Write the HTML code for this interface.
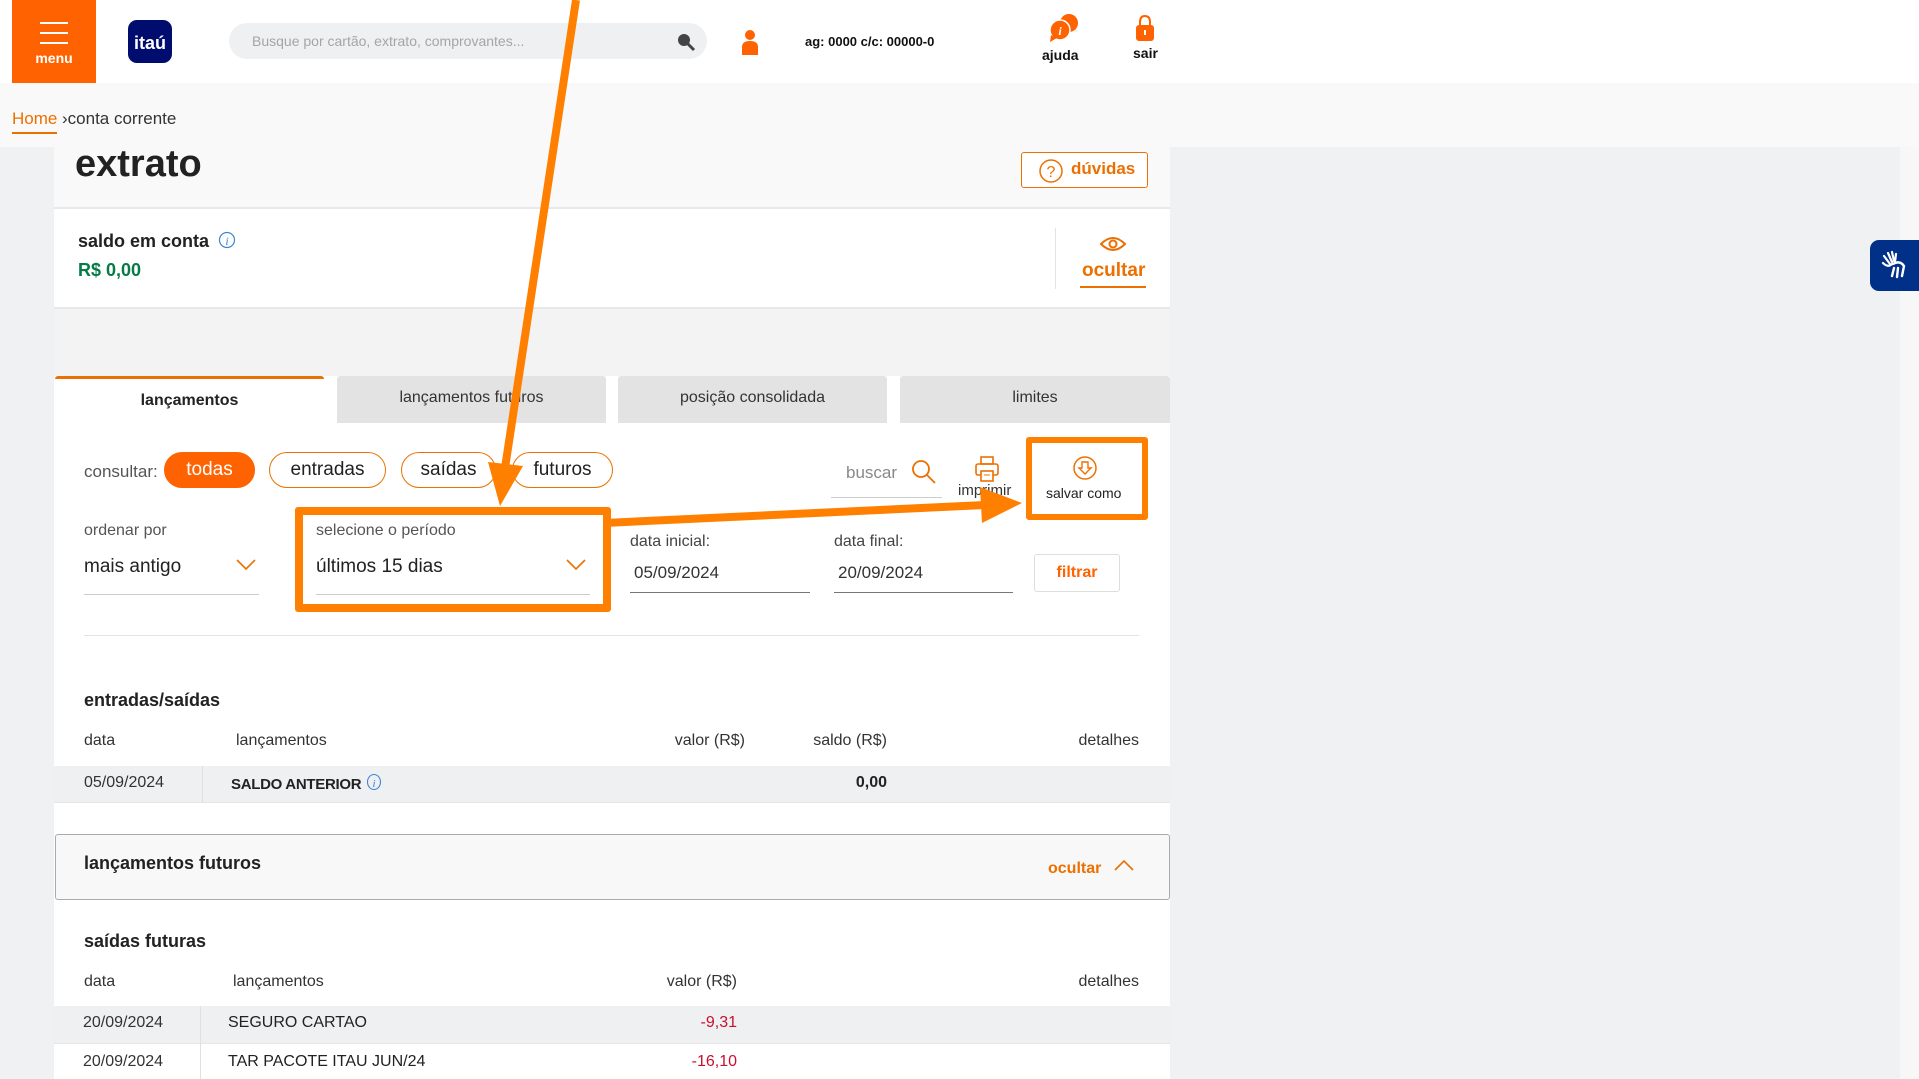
<!DOCTYPE html>
<html><head><meta charset="utf-8"><style>
*{margin:0;padding:0;box-sizing:border-box}
body{width:1919px;height:1079px;overflow:hidden;background:#f0f1f3;font-family:"Liberation Sans",sans-serif;color:#222;position:relative}
.a{position:absolute;white-space:nowrap}
.o{color:#ec7000}
.chip{position:absolute;height:36px;border:1px solid #ec7000;border-radius:18px;font-size:19px;line-height:34px;text-align:center;color:#222;background:#fff}
.tab{position:absolute;top:376px;height:47px;background:#e3e3e3;font-size:16px;line-height:44px;text-align:center;color:#333;border-radius:3px 3px 0 0}
.lbl{font-size:16px;color:#555}
.ul{position:absolute;height:1px;background:#999}
</style></head><body>
<div class="a" style="left:0;top:0;width:1919px;height:83px;background:#fff"></div>
<div class="a" style="left:12px;top:0;width:84px;height:83px;background:#ff6200"></div>
<div class="a" style="left:40px;top:22px;width:28px;height:2px;background:#fff"></div>
<div class="a" style="left:40px;top:32px;width:28px;height:2px;background:#fff"></div>
<div class="a" style="left:40px;top:42px;width:28px;height:2px;background:#fff"></div>
<div class="a" style="left:12px;top:50px;width:84px;text-align:center;color:#fff;font-weight:bold;font-size:14px">menu</div>
<div class="a" style="left:128px;top:20px;width:44px;height:43px;background:#000c6e;border-radius:9px;color:#fff;font-weight:bold;font-size:18px;text-align:center;line-height:46px">itaú</div>
<div class="a" style="left:229px;top:23px;width:478px;height:36px;background:#eff0f2;border-radius:18px"></div>
<div class="a" style="left:252px;top:33px;font-size:14px;color:#a5a5a5">Busque por cartão, extrato, comprovantes...</div>
<svg class="a" style="left:676px;top:32px" width="20" height="20"><circle cx="8" cy="8" r="6" fill="#444"/><line x1="12" y1="12" x2="18" y2="18" stroke="#444" stroke-width="3"/></svg>
<svg class="a" style="left:741px;top:29px" width="18" height="26"><circle cx="9" cy="6" r="5" fill="#ff6200"/><path d="M1 26 V18 Q1 12 9 12 Q17 12 17 18 V26Z" fill="#ff6200"/></svg>
<div class="a" style="left:805px;top:34px;font-size:13px;font-weight:bold;color:#111">ag: 0000 c/c: 00000-0</div>
<svg class="a" style="left:1046px;top:13px" width="34" height="30"><circle cx="23" cy="10" r="9" fill="#ff6200"/><path d="M26 12 L32 20 L28 14Z" fill="#ff6200"/><circle cx="14" cy="17" r="10" fill="#ff6200" stroke="#fff" stroke-width="1.5"/><path d="M5 22 L4 29 L11 25Z" fill="#ff6200"/><text x="14" y="22" font-size="12" fill="#fff" font-style="italic" font-weight="bold" text-anchor="middle" font-family="Liberation Serif">i</text></svg>
<div class="a" style="left:1042px;top:47px;font-size:14px;font-weight:bold;color:#111">ajuda</div>
<svg class="a" style="left:1134px;top:14px" width="22" height="28"><path d="M6 12 V8 Q6 2 11 2 Q16 2 16 8 V12" fill="none" stroke="#ff6200" stroke-width="2"/><rect x="2" y="11" width="18" height="16" rx="3" fill="#ff6200"/><rect x="10" y="16" width="2" height="5" fill="#fff"/></svg>
<div class="a" style="left:1133px;top:45px;font-size:14px;font-weight:bold;color:#111">sair</div>
<div class="a" style="left:0;top:83px;width:1919px;height:64px;background:#f9f9f9"></div>
<div class="a o" style="left:12px;top:109px;font-size:17px;border-bottom:2px solid #ec7000;padding-bottom:3px;color:#ec7000">Home</div>
<div class="a" style="left:62px;top:109px;font-size:17px;color:#333">›conta corrente</div>
<div class="a" style="left:1900px;top:147px;width:19px;height:932px;background:#f7f7f7"></div>
<div class="a" style="left:54px;top:147px;width:1116px;height:932px;background:#fff"></div>
<div class="a" style="left:54px;top:147px;width:1116px;height:62px;background:#f9f9f9;border-bottom:2px solid #e8e8e8"></div>
<div class="a" style="left:75px;top:143px;font-size:38px;font-weight:bold;color:#222">extrato</div>
<div class="a" style="left:1021px;top:152px;width:127px;height:36px;border:1.5px solid #ec7000;border-radius:3px;background:#fff"></div>
<svg class="a" style="left:1038px;top:158px" width="26" height="26"><circle cx="13" cy="13" r="11" fill="none" stroke="#ec7000" stroke-width="1.5"/><text x="13" y="19" font-size="16" fill="#ec7000" text-anchor="middle">?</text></svg>
<div class="a o" style="left:1071px;top:159px;font-size:17px;font-weight:bold">dúvidas</div>
<div class="a" style="left:78px;top:231px;font-size:18px;font-weight:bold;color:#222">saldo em conta</div>
<svg class="a" style="left:218px;top:231px" width="18" height="18"><circle cx="9" cy="9" r="7.5" fill="none" stroke="#3a87d6" stroke-width="1.2"/><text x="9" y="14" font-size="12" font-style="italic" fill="#3a87d6" text-anchor="middle" font-family="Liberation Serif">i</text></svg>
<div class="a" style="left:78px;top:260px;font-size:18px;font-weight:bold;color:#067a47">R$ 0,00</div>
<div class="a" style="left:1055px;top:228px;width:1px;height:61px;background:#e3e3e3"></div>
<svg class="a" style="left:1100px;top:236px" width="26" height="16"><path d="M1 8 Q13 -4 25 8 Q13 20 1 8Z" fill="none" stroke="#ec7000" stroke-width="2"/><circle cx="13" cy="8" r="3.5" fill="none" stroke="#ec7000" stroke-width="2"/></svg>
<div class="a o" style="left:1082px;top:260px;font-size:19px;font-weight:bold">ocultar</div>
<div class="a" style="left:1080px;top:286px;width:66px;height:2px;background:#ec7000"></div>
<div class="a" style="left:54px;top:307px;width:1116px;height:69px;background:#f3f3f3;border-top:2px solid #e8e8e8"></div>
<div class="tab" style="left:55px;width:269px;background:#fff;border-top:3px solid #ec7000;font-weight:bold;color:#222">lançamentos</div>
<div class="tab" style="left:337px;width:269px">lançamentos futuros</div>
<div class="tab" style="left:618px;width:269px">posição consolidada</div>
<div class="tab" style="left:900px;width:270px">limites</div>
<div class="a lbl" style="left:84px;top:462px;font-size:17px">consultar:</div>
<div class="chip" style="left:164px;top:452px;width:91px;background:#ff6200;color:#fff;border-color:#ff6200">todas</div>
<div class="chip" style="left:269px;top:452px;width:117px">entradas</div>
<div class="chip" style="left:401px;top:452px;width:95px">saídas</div>
<div class="chip" style="left:512px;top:452px;width:101px">futuros</div>
<div class="a lbl" style="left:846px;top:463px;font-size:17px;color:#888">buscar</div>
<div class="ul" style="left:831px;top:497px;width:111px;background:#ccc"></div>
<svg class="a" style="left:910px;top:458px" width="28" height="28"><circle cx="11" cy="11" r="8" fill="none" stroke="#ec7000" stroke-width="1.8"/><line x1="17" y1="17" x2="25" y2="25" stroke="#ec7000" stroke-width="1.8"/></svg>
<svg class="a" style="left:974px;top:455px" width="26" height="28"><rect x="7" y="2" width="12" height="7" fill="none" stroke="#ec7000" stroke-width="1.6"/><rect x="2" y="9" width="22" height="11" rx="2" fill="none" stroke="#ec7000" stroke-width="1.6"/><rect x="7" y="16" width="12" height="10" fill="#fff" stroke="#ec7000" stroke-width="1.6"/><line x1="10" y1="20" x2="16" y2="20" stroke="#ec7000"/></svg>
<div class="a" style="left:958px;top:482px;font-size:15px;color:#333">imprimir</div>
<div class="a" style="left:1026px;top:437px;width:122px;height:83px;border:6px solid #ff8000;border-radius:3px;background:#fff"></div>
<svg class="a" style="left:1072px;top:455px" width="26" height="26"><circle cx="13" cy="13" r="11" fill="none" stroke="#ec7000" stroke-width="1.5"/><path d="M10 7 H16 V13 H19 L13 19 L7 13 H10Z" fill="none" stroke="#ec7000" stroke-width="1.4"/></svg>
<div class="a" style="left:1046px;top:485px;font-size:14px;color:#222">salvar como</div>
<div class="a lbl" style="left:84px;top:522px">ordenar por</div>
<div class="a" style="left:84px;top:556px;font-size:19px;color:#222">mais antigo</div>
<svg class="a" style="left:235px;top:558px" width="22" height="14"><path d="M2 2 L11 11 L20 2" fill="none" stroke="#ec7000" stroke-width="1.6"/></svg>
<div class="ul" style="left:84px;top:594px;width:175px;background:#ccc"></div>
<div class="a" style="left:295px;top:507px;width:316px;height:105px;border:8px solid #ff8000;border-radius:3px;background:#fff"></div>
<div class="a lbl" style="left:316px;top:522px">selecione o período</div>
<div class="a" style="left:316px;top:556px;font-size:19px;color:#222">últimos 15 dias</div>
<svg class="a" style="left:565px;top:558px" width="22" height="14"><path d="M2 2 L11 11 L20 2" fill="none" stroke="#ec7000" stroke-width="1.6"/></svg>
<div class="ul" style="left:316px;top:594px;width:274px;background:#ccc"></div>
<div class="a lbl" style="left:630px;top:533px;color:#444">data inicial:</div>
<div class="a" style="left:634px;top:563px;font-size:17px;color:#333">05/09/2024</div>
<div class="ul" style="left:630px;top:592px;width:180px;background:#777"></div>
<div class="a lbl" style="left:834px;top:533px;color:#444">data final:</div>
<div class="a" style="left:838px;top:563px;font-size:17px;color:#333">20/09/2024</div>
<div class="ul" style="left:834px;top:592px;width:179px;background:#777"></div>
<div class="a" style="left:1034px;top:554px;width:86px;height:38px;border:1px solid #ddd;border-radius:3px;text-align:center;line-height:36px;color:#ff6200;font-weight:bold;font-size:16px">filtrar</div>
<div class="a" style="left:84px;top:635px;width:1055px;height:1px;background:#e3e3e3"></div>
<div class="a" style="left:84px;top:690px;font-size:18px;font-weight:bold;color:#222">entradas/saídas</div>
<div class="a lbl" style="left:84px;top:732px;color:#333">data</div>
<div class="a lbl" style="left:236px;top:732px;color:#333">lançamentos</div>
<div class="a lbl" style="left:645px;top:732px;width:100px;text-align:right;color:#333">valor (R$)</div>
<div class="a lbl" style="left:787px;top:732px;width:100px;text-align:right;color:#333">saldo (R$)</div>
<div class="a lbl" style="left:1039px;top:732px;width:100px;text-align:right;color:#333">detalhes</div>
<div class="a" style="left:54px;top:766px;width:1116px;height:37px;background:#eff0f2;border-bottom:1px solid #e6e6e6"></div>
<div class="a" style="left:202px;top:766px;width:1px;height:37px;background:#e0e0e0"></div>
<div class="a" style="left:84px;top:774px;font-size:16px;color:#333">05/09/2024</div>
<div class="a" style="left:231px;top:776px;font-size:15px;font-weight:bold;color:#222;letter-spacing:-0.3px">SALDO ANTERIOR</div>
<svg class="a" style="left:366px;top:773px" width="16" height="18"><ellipse cx="8" cy="9" rx="6.5" ry="7.5" fill="none" stroke="#3a87d6" stroke-width="1.1"/><text x="8" y="14" font-size="11" font-style="italic" fill="#3a87d6" text-anchor="middle" font-family="Liberation Serif">i</text></svg>
<div class="a" style="left:787px;top:774px;width:100px;text-align:right;font-size:16px;font-weight:bold;color:#222">0,00</div>
<div class="a" style="left:55px;top:834px;width:1115px;height:66px;border:1.5px solid #aaa;border-radius:3px;background:#f8f8f8"></div>
<div class="a" style="left:84px;top:853px;font-size:18px;font-weight:bold;color:#222">lançamentos futuros</div>
<div class="a o" style="left:1048px;top:860px;font-size:16px;font-weight:bold">ocultar</div>
<svg class="a" style="left:1113px;top:858px" width="22" height="14"><path d="M2 12 L11 3 L20 12" fill="none" stroke="#ec7000" stroke-width="1.6"/></svg>
<div class="a" style="left:84px;top:931px;font-size:18px;font-weight:bold;color:#222">saídas futuras</div>
<div class="a lbl" style="left:84px;top:973px;color:#333">data</div>
<div class="a lbl" style="left:233px;top:973px;color:#333">lançamentos</div>
<div class="a lbl" style="left:637px;top:973px;width:100px;text-align:right;color:#333">valor (R$)</div>
<div class="a lbl" style="left:1039px;top:973px;width:100px;text-align:right;color:#333">detalhes</div>
<div class="a" style="left:54px;top:1006px;width:1116px;height:38px;background:#eff0f2;border-bottom:1px solid #e6e6e6"></div>
<div class="a" style="left:200px;top:1006px;width:1px;height:73px;background:#e0e0e0"></div>
<div class="a" style="left:83px;top:1014px;font-size:16px;color:#333">20/09/2024</div>
<div class="a" style="left:228px;top:1014px;font-size:16px;color:#222">SEGURO CARTAO</div>
<div class="a" style="left:637px;top:1014px;width:100px;text-align:right;font-size:16px;color:#c8102e">-9,31</div>
<div class="a" style="left:83px;top:1053px;font-size:16px;color:#333">20/09/2024</div>
<div class="a" style="left:228px;top:1053px;font-size:16px;color:#222">TAR PACOTE ITAU JUN/24</div>
<div class="a" style="left:637px;top:1053px;width:100px;text-align:right;font-size:16px;color:#c8102e">-16,10</div>
<div class="a" style="left:1870px;top:240px;width:49px;height:51px;background:#003087;border-radius:9px 0 0 9px"></div>
<svg class="a" style="left:1880px;top:250px" width="30" height="30"><path d="M4 6 L10 14 M8 3 L12 12 M12 2 L14 11 M16 4 L15 12 M3 13 Q8 18 12 14" stroke="#fff" stroke-width="2.2" fill="none" stroke-linecap="round"/><path d="M13 14 Q20 10 24 16 L22 26 M18 18 L17 27 M14 18 L12 26" stroke="#fff" stroke-width="2.4" fill="none" stroke-linecap="round"/></svg>
<svg class="a" style="left:0;top:0" width="1919" height="1079">
<line x1="576" y1="0" x2="505" y2="468" stroke="#ff8000" stroke-width="8"/>
<polygon points="488,462 523,466 500,506" fill="#ff8000"/>
<line x1="604" y1="523" x2="985" y2="505" stroke="#ff8000" stroke-width="8"/>
<polygon points="980,487 1022,503 982,523" fill="#ff8000"/>
</svg>
</body></html>
